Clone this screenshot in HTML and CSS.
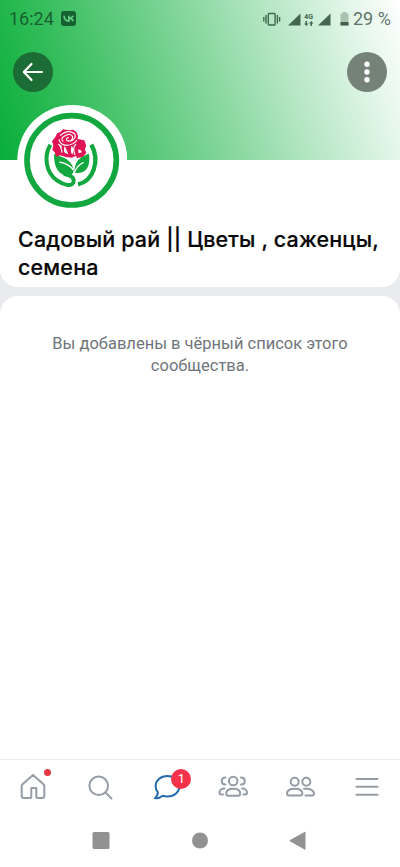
FILE: index.html
```html
<!DOCTYPE html>
<html lang="ru">
<head>
<meta charset="utf-8">
<meta name="viewport" content="width=device-width">
<title>Садовый рай</title>
<link rel="stylesheet" href="styles.css">
</head>
<body>
<div class="screen">
  <header class="cover">
    <div class="status">
      <span class="time">16:24</span>
      <svg class="vk" width="15" height="15" viewBox="0 0 15 15"><rect width="15" height="15" rx="3" fill="#17602f"/><path d="M3 4.800c.2 3.500 1.700 5.300 4.800 5.300V4.800M12 4.800c-.5 1.500-1.800 2.500-4 2.600 2.300.1 3.700 1.200 4.300 2.800" fill="none" stroke="#5fcc80" stroke-width="1.700"/></svg>
      <svg class="indicators" width="94" height="18" viewBox="0 0 94 18">
        <g fill="none" stroke="#3f6a4d" stroke-width="1.400"><rect x="6.300" y="3.500" width="6.800" height="11.500" rx=".8"/><path d="M4 5v8.500M1.800 7v4.500M15.400 5v8.500M17.600 7v4.500"/></g>
        <g fill="#44664f"><path d="M26 15.500L38.500 3.500v12zM56 15.500L68.500 3.500v12z"/><path d="M43.500 11v2.500h-1.500l2.300 2.600 2.300-2.600H45V11zM48.500 16v-2.500H47l2.300-2.600 2.300 2.600H50V16z"/></g>
        <text x="42.300" y="8.500" class="net">4G</text>
        <path d="M78.500 3.500h2V2h4v1.500h2v12h-8z" fill="#a9c3b0"/><path d="M78.500 12h8v3.500h-8z" fill="#46604e"/>
      </svg>
      <span class="percent">29 %</span>
    </div>
    <div class="actions">
      <button class="round back" aria-label="Назад"><svg width="22" height="20" viewBox="0 0 22 20"><path d="M20 10H2M9.500 2L1.800 10l7.700 8" fill="none" stroke="#fff" stroke-width="2.200" stroke-linecap="round" stroke-linejoin="round"/></svg></button>
      <button class="round more" aria-label="Ещё"><svg width="6" height="22" viewBox="0 0 6 22" fill="#fff"><circle cx="3" cy="3.200" r="2.700"/><circle cx="3" cy="11" r="2.700"/><circle cx="3" cy="18.800" r="2.700"/></svg></button>
    </div>
  </header>
  <section class="card profile">
    <svg class="avatar" width="110" height="110" viewBox="21 30 330 330">
      <circle cx="187" cy="195" r="165" fill="#fff"/>
      <circle cx="185" cy="196" r="134" fill="none" stroke="#12a83f" stroke-width="17"/>
      <g fill="none" stroke="#12a83f"><path d="M121 149C101 184 107 233 141 256C160 270 190 278 191 258C192 244 178 241 162 237" stroke-width="12"/><path d="M244 149C271 198 250 258 204 268" stroke-width="13"/></g>
      <g fill="#12a83f"><path d="M132 176C150 186 184 188 191 224C190 236 184 243 174 243C145 240 131 215 132 176zM237 176C207 185 194 200 193 233C226 238 243 217 237 176z"/></g>
      <path d="M148 201q29 5 42 24M221 202q-19 8-28 31" fill="none" stroke="#fff" stroke-width="4"/>
      <path fill="#df1455" d="M142 114l8-2 9-9 17 3 13-2 10 6 5 12-1 10 20 4 6 17-5 10 5 10-11 13-17 3-3-7-12 6-18-2-17-5-12 4-5-13-7-7 3-14-4-12 10-13z"/>
      <g fill="none" stroke="#fff" stroke-width="3.500"><path d="M150 122q23-21 44-6q7 13-12 23M160 140q-11-10 5-18q19-9 23 4q-1 15-17 11q-6-7 5-9M147 133q4 17 23 18q20-1 31-16M145 147q9 7 11 26M198 147q-12 12-3 33"/></g>
      <path fill="#fff" d="M164 153q7 12 11 25-20-4-11-25zM185 152q9 9 2 27-8-10-2-27zM204 164q9-2 12 8l-10 3zM149 148l7 5-3 7z"/>
    </svg>
    <h1>Садовый рай || Цветы , саженцы,<br>семена</h1>
  </section>
  <main class="card notice"><p>Вы добавлены в чёрный список этого<br>сообщества.</p></main>
  <nav class="tabs">
    <a class="tab"><svg viewBox="0 0 32 32"><path d="M5.500 14.200L16 5l10.500 9.200q.8.700.8 1.800v10q0 2-2 2h-4.500q-1.500 0-1.500-1.500V18h-5v8.500q0 1.500-1.500 1.500H6.700q-2 0-2-2V16q0-1.100.8-1.800z"/></svg><i class="dot"></i></a>
    <a class="tab"><svg viewBox="0 0 32 32"><circle cx="14.700" cy="15.800" r="9.300"/><path d="M21.500 22.500l6 6"/></svg></a>
    <a class="tab active"><svg viewBox="0 0 32 32"><path d="M16.500 6C9.500 6 4.600 10.500 4.600 16.200c0 2.500.8 4.300 2.200 5.900.2 2.200-.7 4-2.800 6.200 3.300.2 5.700-.9 7.700-2.600 1.500.5 3 .7 4.800.7 7 0 11.900-4.500 11.900-10.200S23.500 6 16.500 6z"/></svg><b class="badge">1</b></a>
    <a class="tab"><svg viewBox="0 0 32 32"><circle cx="16.200" cy="11" r="4.300"/><path d="M16.200 18.700c-4.500 0-7 2-7 4.800 0 1.700 1 2.300 2.300 2.300h9.400c1.300 0 2.300-.6 2.300-2.300 0-2.800-2.500-4.800-7-4.800zM8.500 7.500c-5 0-5 7 0 7M24 7.500c5 0 5 7 0 7M7.500 18.500c-3 0-5 1.800-5 4 0 1.300.8 2 2 2h1.500M25 18.500c3 0 5 1.800 5 4 0 1.300-.8 2-2 2h-1.500"/></svg></a>
    <a class="tab"><svg viewBox="0 0 32 32"><circle cx="10.700" cy="11.700" r="4"/><circle cx="22.300" cy="11.700" r="4"/><path d="M10.700 18.700c-5 0-7.700 2-7.700 4.800 0 1.400.7 2 2 2h11.400c1.300 0 2-.6 2-2 0-2.800-2.700-4.800-7.700-4.800zM20 18.700c6.500-.5 10 1.800 10 4.800 0 1.400-.7 2-2 2h-6.500"/></svg></a>
    <a class="tab"><svg viewBox="0 0 32 32"><path d="M5.500 9h21M5.500 16.800h21M5.500 24.700h21"/></svg></a>
  </nav>
  <div class="system">
    <svg width="400" height="26" viewBox="0 0 400 26" fill="#929292"><rect x="92.500" y="5" width="17" height="17" rx="1.500"/><circle cx="200" cy="13.500" r="8"/><path d="M305.500 5.500v16.500q0 1-1 .5L290 14.300q-1-.6 0-1.200L304.500 5q1-.5 1 .5z"/></svg>
  </div>
</div>
</body>
</html>
```
FILE: styles.css
```css
* { box-sizing: border-box; }
body { margin: 0; font-family: Roboto, sans-serif; }
.screen { width: 400px; height: 867px; display: flex; flex-direction: column; background: #e9eaee; overflow: hidden; }
.cover { height: 160px; flex: none; background: linear-gradient(72deg, #08ae39 0%, #35bd5c 20%, #7dd496 48%, #b4e6c3 69%, #e0f5e7 87%, #fff 100%); }
.status { height: 37px; display: flex; align-items: center; padding: 0 10px 0 9px; font-size: 18px; }
.time { color: #17602f; width: 52px; }
.indicators { margin-left: auto; margin-right: -3px; }
.net { font: 700 7px Roboto, sans-serif; fill: #44664f; }
.percent { color: #607568; width: 37px; white-space: nowrap; }
.actions { display: flex; justify-content: space-between; padding: 15px 13px 0; }
.round { width: 40px; height: 40px; border: 0; border-radius: 50%; padding: 0; display: grid; place-items: center; }
.back { background: #1b6c35; }
.more { background: #748278; }
.card { background: #fff; }
.profile { height: 127px; flex: none; border-radius: 0 0 18px 18px; padding: 0 17px; }
.avatar { display: block; margin-top: -55px; }
h1 { margin: 10px 0 0 1px; font: 500 21.500px/28px Inter, sans-serif; letter-spacing: 0.150px; color: #080808; -webkit-text-stroke: 0.200px #080808; white-space: nowrap; }
.notice { margin-top: 9px; flex: 1; border-radius: 18px 18px 0 0; }
.notice p { margin: 37px 0 0; text-align: center; font-size: 16.500px; line-height: 22px; color: #70757b; }
.tabs { height: 55px; border-top: 1px solid #ebecee; background: #fff; display: grid; grid-template-columns: repeat(6, 1fr); }
.tab { position: relative; display: grid; justify-items: center; align-content: start; padding-top: 10px; color: #969ca5; }
.tab svg { width: 32px; height: 32px; fill: none; stroke: currentColor; stroke-width: 2; stroke-linecap: round; stroke-linejoin: round; }
.active { color: #276cac; }
.dot { position: absolute; left: 44px; top: 9px; width: 7px; height: 7px; border-radius: 50%; background: #e63946; }
.badge { position: absolute; left: 38px; top: 9px; width: 20px; height: 20px; border-radius: 50%; background: #f4324a; color: #fff; font: 400 13px/20px Roboto, sans-serif; text-align: center; }
.system { height: 53px; background: #fff; padding-top: 13px; }
.system svg { display: block; }
```
